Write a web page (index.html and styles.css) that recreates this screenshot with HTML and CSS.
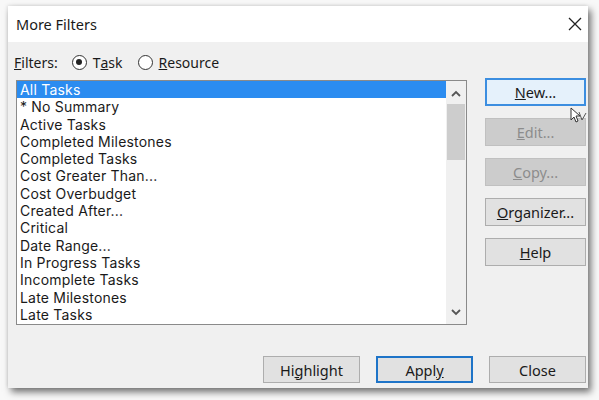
FILE: index.html
```html
<!DOCTYPE html>
<html>
<head>
<meta charset="utf-8">
<link rel="stylesheet" href="styles.css">
</head>
<body>
<div class="dialog">
  <div class="titlebar">
    <span class="title">More Filters</span>
    <svg class="close" width="14" height="14" viewBox="0 0 14 14"><path d="M1 1 L13 13 M13 1 L1 13" stroke="#222" stroke-width="1.3" fill="none"/></svg>
  </div>
  <div class="body">
    <div class="filters">
      <span class="lbl"><u>F</u>ilters:</span>
      <span class="radio"><span class="circle on"></span>T<u>a</u>sk</span>
      <span class="radio"><span class="circle"></span><u>R</u>esource</span>
    </div>
    <div class="main">
      <div class="list">
        <ul class="items">
          <li class="sel">All Tasks</li>
          <li>* No Summary</li>
          <li>Active Tasks</li>
          <li>Completed Milestones</li>
          <li>Completed Tasks</li>
          <li>Cost Greater Than...</li>
          <li>Cost Overbudget</li>
          <li>Created After...</li>
          <li>Critical</li>
          <li>Date Range...</li>
          <li>In Progress Tasks</li>
          <li>Incomplete Tasks</li>
          <li>Late Milestones</li>
          <li>Late Tasks</li>
        </ul>
        <div class="scroll">
          <svg class="arr" width="10" height="7" viewBox="0 0 10 7"><path d="M1 6 L5 2 L9 6" stroke="#555" stroke-width="1.8" fill="none"/></svg>
          <div class="thumb"></div>
          <div class="track"></div>
          <svg class="arr" width="10" height="7" viewBox="0 0 10 7"><path d="M1 1 L5 5 L9 1" stroke="#555" stroke-width="1.8" fill="none"/></svg>
        </div>
      </div>
      <div class="side">
        <button class="btn focus"><u>N</u>ew...</button>
        <button class="btn dis"><u>E</u>dit...</button>
        <button class="btn dis"><u>C</u>opy...</button>
        <button class="btn"><u>O</u>rganizer...</button>
        <button class="btn"><u>H</u>elp</button>
      </div>
    </div>
    <div class="footer">
      <button class="btn wide">Hi<u>g</u>hlight</button>
      <button class="btn wide def">Appl<u>y</u></button>
      <button class="btn wide">Close</button>
    </div>
  </div>
  <svg class="cursor" width="18" height="16" viewBox="0 0 18 16"><path d="M1 1 L1 13 L4 10 L6 15 L8 14 L6 9 L10 9 Z" fill="#fff" stroke="#333" stroke-width="1"/><path d="M9 5 L12 13 L16 6" fill="none" stroke="#555" stroke-width="1"/></svg>
</div>
</body>
</html>
```
FILE: styles.css
```css
html, body { margin: 0; padding: 0; }
body {
  width: 599px; height: 400px; overflow: hidden;
  background: #f8f8f8;
  font-family: "Noto Sans", "Open Sans", sans-serif;
  color: #1a1a1a;
}
.dialog {
  position: relative;
  margin: 6px 0 0 8px;
  width: 580px; height: 382px;
  background: #f0f0f0;
  box-shadow: 3px 4px 7px rgba(0,0,0,0.55), -1px -1px 3px rgba(0,0,0,0.08);
  display: flex; flex-direction: column;
}
.titlebar {
  height: 36px; background: #fff;
  display: flex; align-items: center; justify-content: space-between;
  padding: 0 6px 0 8px;
}
.title { font-size: 14.5px; color: #1a1a1a; }
.body { flex: 1; display: flex; flex-direction: column; padding: 0 2px 0 8px; }
.filters {
  height: 20px; margin-top: 10px;
  display: flex; align-items: center;
  font-size: 14px;
  margin-left: -2px;
}
.lbl { margin-right: 14px; }
.radio { display: flex; align-items: center; margin-right: 15px; }
.circle {
  border: 1.3px solid #333; border-radius: 50%;
  margin-right: 6px; position: relative; background: #fff; box-sizing: border-box;
  width: 15px; height: 15px;
}
.circle.on::after {
  content: ""; position: absolute; left: 3px; top: 3px;
  width: 6.4px; height: 6.4px; border-radius: 50%; background: #222;
}
.main { display: flex; margin-top: 6px; }
.list {
  width: 449px; height: 243px; margin-top: 2px;
  border: 1px solid #8a8a8a; background: #fff;
  display: flex;
}
.items {
  list-style: none; margin: 0; padding: 0; flex: 1;
  font-family: Inter, "Noto Sans", sans-serif;
  font-size: 14px; letter-spacing: 0.2px;
}
.items li { height: 17.3px; line-height: 17.3px; padding-left: 3px; white-space: nowrap; }
.items li.sel { background: #2b8cf0; color: #fff; }
.scroll {
  width: 20px; background: #f0f0f0;
  display: flex; flex-direction: column; align-items: center;
}
.arr { margin: 9px 0 4px; flex: none; }
.scroll .arr:last-child { margin: 4px 0 8px; }
.thumb { width: 18px; height: 56px; background: #cdcdcd; flex: none; margin-top: 3px; }
.track { flex: 1; }
.side { display: flex; flex-direction: column; gap: 12px; margin-left: 18px; }
.btn {
  width: 101px; height: 28px;
  background: #e1e1e1; border: 1px solid #adadad;
  font-family: "Noto Sans", "Open Sans", sans-serif; font-size: 14.5px; color: #1a1a1a;
  padding: 0; margin: 0;
}
.btn.focus { background: #e5f1fb; border: 2px solid #3c8ee0; }
.btn.dis { background: #cccccc; border-color: #c0c0c0; color: #8c8c8c; }
.footer { display: flex; justify-content: flex-end; gap: 16px; margin-top: 31px; }
.btn.wide { width: 97px; height: 27px; }
.btn.def { border: 2px solid #1e74c8; }
.cursor { position: absolute; left: 562px; top: 101px; }
```
